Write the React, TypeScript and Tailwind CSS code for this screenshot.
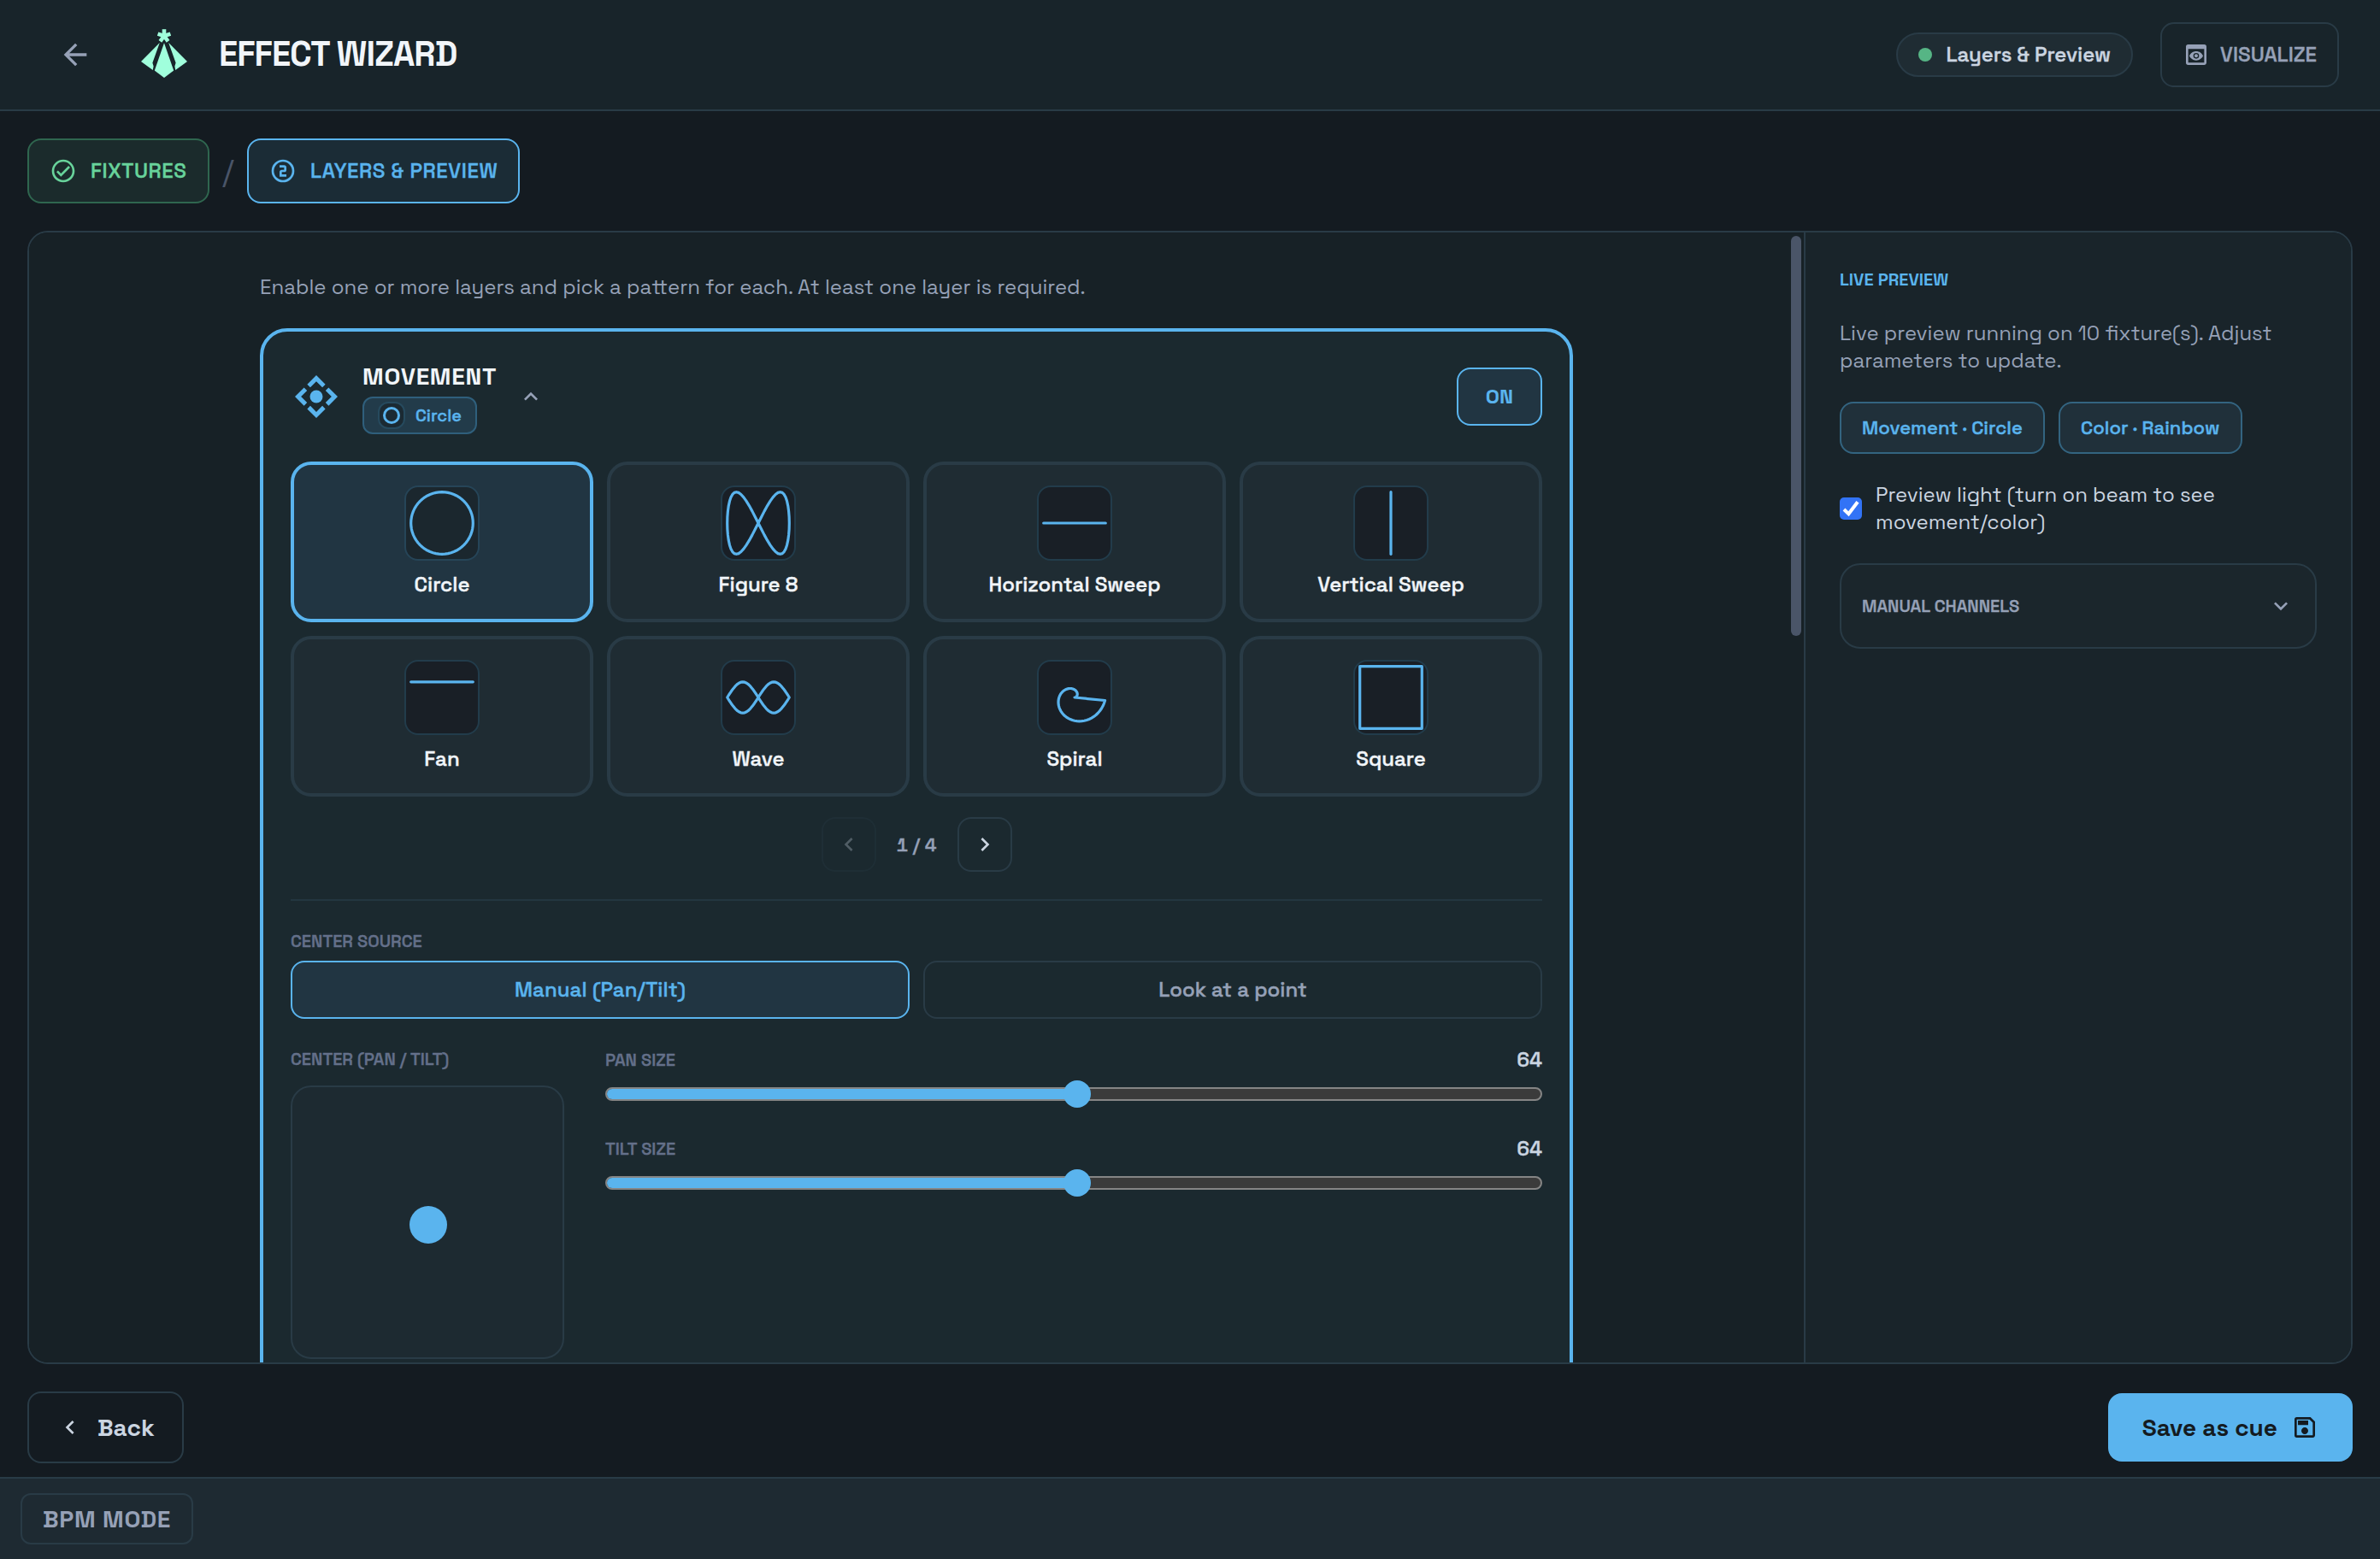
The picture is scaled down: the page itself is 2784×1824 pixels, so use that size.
import React from "react";
import {
  MdArrowBack,
  MdChevronLeft,
  MdChevronRight,
  MdExpandLess,
  MdExpandMore,
  MdOutlineSave,
  MdPreview,
} from "react-icons/md";

type Point = [number, number];

const R = 36.3;
const STEPS = 64;

function toPath(points: Point[], close: boolean) {
  return points.map(([x, y], i) => `${i ? "L" : "M"}${x.toFixed(2)} ${y.toFixed(2)}`).join(" ") + (close ? " Z" : "");
}

function sample(fn: (t: number) => Point): Point[] {
  return Array.from({ length: STEPS }, (_, i) => fn(i / STEPS));
}

const TAU = Math.PI * 2;

const PATHS: Record<string, string> = {
  Circle: toPath(sample((t) => [R * Math.cos(TAU * t), R * Math.sin(TAU * t)]), true),
  "Figure 8": toPath(sample((t) => [R * Math.cos(TAU * t), R * Math.sin(2 * TAU * t)]), true),
  "Horizontal Sweep": `M${-R} 0 L${R} 0`,
  "Vertical Sweep": `M0 ${-R} L0 ${R}`,
  Fan: `M${-R} ${-R / 2} L${R} ${-R / 2}`,
  Wave: toPath(
    sample((t) => {
      const x = t < 0.5 ? -R + 4 * R * t : 3 * R - 4 * R * t;
      return [x, (t < 0.5 ? 1 : -1) * (R / 2) * Math.sin((Math.PI * x) / R)];
    }),
    true,
  ),
  Spiral: toPath(sample((t) => [R * t * Math.cos(TAU * t), -R * t * Math.sin(TAU * t)]), true),
  Square: `M${-R} ${-R} H${R} V${R} H${-R} Z`,
};

// Medium weight thickened slightly to sit between 500 and 700.
const SEMI = "font-medium [-webkit-text-stroke:0.45px_currentColor]";

function Logo() {
  return (
    <svg viewBox="0 0 56 60" className="h-[60px] w-[56px] shrink-0 fill-[#a0ffdc]">
      <g className="stroke-[#a0ffdc]" strokeWidth="4.6">
        {[0, 72, 144, 216, 288].map((a) => (
          <path key={a} d="M28 8V0.2" transform={`rotate(${a} 28 8)`} />
        ))}
      </g>
      <path d="M28 16.2 39.2 48.4 28 57 16.8 48.4Z" />
      <path d="M22.8 16 14.4 39.4 15.6 43.4 14.8 48 1 38Z" />
      <path d="M33.2 16 41.6 39.4 40.4 43.4 41.2 48 55 38Z" />
    </svg>
  );
}

function CheckCircle() {
  return (
    <svg viewBox="0 0 24 24" className="size-8 fill-current">
      <path d="M12 2C6.5 2 2 6.5 2 12S6.5 22 12 22 22 17.5 22 12 17.5 2 12 2M12 20C7.59 20 4 16.41 4 12S7.59 4 12 4 20 7.59 20 12 16.41 20 12 20M16.59 7.58L10 14.17L7.41 11.59L6 13L10 17L18 9L16.59 7.58Z" />
    </svg>
  );
}

function StepTwo() {
  return (
    <svg viewBox="0 0 24 24" className="size-8 fill-current">
      <path d="M9,7V9H13V11H11A2,2 0 0,0 9,13V17H11L15,17V15H11V13H13A2,2 0 0,0 15,11V9A2,2 0 0,0 13,7H9M12,2A10,10 0 0,1 22,12A10,10 0 0,1 12,22A10,10 0 0,1 2,12A10,10 0 0,1 12,2M12,4A8,8 0 0,0 4,12A8,8 0 0,0 12,20A8,8 0 0,0 20,12A8,8 0 0,0 12,4Z" />
    </svg>
  );
}

function MovementIcon() {
  return (
    <svg viewBox="0 0 24 24" className="size-[60px] shrink-0 fill-[#5ab4ee]">
      <circle cx="12" cy="12" r="3" />
      {[0, 90, 180, 270].map((a) => (
        <path key={a} d="M12 2 16.25 6.25 14.82 7.68 12 4.85 9.18 7.68 7.75 6.25Z" transform={`rotate(${a} 12 12)`} />
      ))}
    </svg>
  );
}

function PatternCard({ name, selected }: { name: string; selected?: boolean }) {
  return (
    <div
      className={`flex h-[188px] flex-col items-center rounded-3xl border-4 pt-6 ${
        selected ? "border-[#5ab4ee] bg-[#213542]" : "border-[#293b46] bg-[#1f2c33]"
      }`}
    >
      <div
        className={`size-[88px] rounded-2xl border-2 ${
          selected ? "border-[#264558] bg-[#1b272e]" : "border-[#223c4b] bg-[#191f26]"
        }`}
      >
        <svg viewBox="-42 -42 84 84" className="size-[84px] fill-none stroke-[#5ab4ee]">
          <path d={PATHS[name]} strokeWidth="3.2" strokeLinejoin="round" strokeLinecap="round" />
        </svg>
      </div>
      <div className={`mt-3 text-[24px]/[32px] text-[#f1f5f9] ${SEMI}`}>{name}</div>
    </div>
  );
}

function Slider({ label, value }: { label: string; value: number }) {
  const ratio = value / 127;
  return (
    <div className="flex flex-col gap-4">
      <div className="flex h-8 items-center justify-between">
        <span className={`text-[20px]/[30px] text-[#64708a] ${SEMI}`}>{label}</span>
        <span className={`text-[24px]/[32px] text-[#cbd5e1] tabular-nums ${SEMI}`}>{value}</span>
      </div>
      <div className="relative h-4 rounded-full border-2 border-[#858585] bg-[#3b3b3b]">
        <div className="h-full rounded-l-full bg-[#5ab4ee]" style={{ width: `${ratio * 100}%` }} />
        <div
          className="absolute -top-[10px] size-8 rounded-full bg-[#5ab4ee]"
          style={{ left: `calc((100% - 28px) * ${ratio} - 2px)` }}
        />
      </div>
    </div>
  );
}

function Header() {
  return (
    <header className="flex h-[130px] shrink-0 items-center border-b-2 border-[#293b46] bg-[#18242a] pr-12 pl-[68px]">
      <MdArrowBack className="size-10 text-[#96a1b7]" />
      <div className="ml-14 flex">
        <Logo />
      </div>
      <h1 className="ml-9 text-[40px]/[56px] font-bold tracking-tight text-[#f1f5f9]">EFFECT WIZARD</h1>
      <div className="ml-auto flex items-center gap-8">
        <div className="flex h-[52px] items-center gap-4 rounded-full border-2 border-[#293b46] bg-[#1f2c33] px-6">
          <span className="size-4 rounded-full bg-[#56b585]" />
          <span className={`text-[24px]/[32px] text-[#cbd5e1] ${SEMI}`}>Layers &amp; Preview</span>
        </div>
        <button className="flex h-[76px] items-center gap-3 rounded-2xl border-2 border-[#293b46] px-6 text-[#96a1b7]">
          <MdPreview className="size-8" />
          <span className={`text-[24px]/[32px] ${SEMI}`}>VISUALIZE</span>
        </button>
      </div>
    </header>
  );
}

function Steps() {
  return (
    <nav className="mt-8 flex h-[76px] shrink-0 items-center gap-4 px-8">
      <div className="flex h-full w-[213px] items-center gap-4 rounded-2xl border-2 border-[#2f664f] bg-[#1b2b2c] px-6 text-[#68d39b]">
        <CheckCircle />
        <span className={`text-[24px]/[32px] tracking-wide ${SEMI}`}>FIXTURES</span>
      </div>
      <span className="flex w-3 justify-center text-[36px]/[40px] text-[#4a5568]">/</span>
      <div className="flex h-full items-center gap-4 rounded-2xl border-2 border-[#5ab4ee] bg-[#1b2c36] px-6 text-[#5ab4ee]">
        <StepTwo />
        <span className={`text-[24px]/[32px] tracking-wide ${SEMI}`}>LAYERS &amp; PREVIEW</span>
      </div>
    </nav>
  );
}

function MovementLayer() {
  return (
    <section className="mt-8 rounded-t-[32px] border-4 border-[#5ab4ee] bg-[#1b292f] p-8">
      <div className="flex h-[88px] items-center">
        <MovementIcon />
        <div className="ml-6 flex flex-col items-start gap-1">
          <h2 className="text-[28px]/[40px] font-bold tracking-wide text-[#f1f5f9]">MOVEMENT</h2>
          <div className="flex h-11 items-center gap-3 rounded-xl border-2 border-[#2f5f7c] bg-[#223b4a] px-4 text-[#5ab4ee]">
            <span className="flex size-8 items-center justify-center rounded-[12px] border-2 border-[#264a5e] bg-[#1b2a33]">
              <span className="size-5 rounded-full border-[3.5px] border-[#5ab4ee]" />
            </span>
            <span className={`text-[20px]/[30px] ${SEMI}`}>Circle</span>
          </div>
        </div>
        <MdExpandLess className="ml-6 size-8 text-[#96a1b7]" />
        <button className="ml-auto h-[68px] w-[100px] rounded-2xl border-2 border-[#5ab4ee] bg-[#213542] text-[24px]/[32px] font-bold text-[#5ab4ee]">
          ON
        </button>
      </div>

      <div className="mt-8 grid grid-cols-4 gap-4">
        <PatternCard name="Circle" selected />
        <PatternCard name="Figure 8" />
        <PatternCard name="Horizontal Sweep" />
        <PatternCard name="Vertical Sweep" />
        <PatternCard name="Fan" />
        <PatternCard name="Wave" />
        <PatternCard name="Spiral" />
        <PatternCard name="Square" />
      </div>

      <div className="mt-6 flex items-center justify-center gap-6">
        <button className="flex size-16 items-center justify-center rounded-2xl border-2 border-[#293b46] text-[#cbd5e1] opacity-30">
          <MdChevronLeft className="size-8" />
        </button>
        <span className={`w-[47px] text-center text-[22px]/[33px] whitespace-nowrap text-[#96a1b7] tabular-nums ${SEMI}`}>
          1 / 4
        </span>
        <button className="flex size-16 items-center justify-center rounded-2xl border-2 border-[#293b46] text-[#cbd5e1]">
          <MdChevronRight className="size-8" />
        </button>
      </div>

      <div className="mt-8 border-t-2 border-[#233640] pt-8">
        <div className={`text-[20px]/[30px] text-[#64708a] ${SEMI}`}>CENTER SOURCE</div>
        <div className="mt-2 grid grid-cols-2 gap-4">
          <button
            className={`h-[68px] rounded-2xl border-2 border-[#5ab4ee] bg-[#213542] text-[24px]/[32px] tracking-[0.12px] text-[#5ab4ee] ${SEMI}`}
          >
            Manual (Pan/Tilt)
          </button>
          <button className={`h-[68px] rounded-2xl border-2 border-[#293b46] text-[24px]/[32px] text-[#96a1b7] ${SEMI}`}>
            Look at a point
          </button>
        </div>
        <div className="mt-8 flex gap-12">
          <div>
            <div className={`text-[20px]/[30px] text-[#64708a] ${SEMI}`}>CENTER (PAN / TILT)</div>
            <div className="mt-4 flex size-80 items-center justify-center rounded-3xl border-2 border-[#293b46] bg-[#1d2a31]">
              <div className="mt-[6px] ml-[2px] size-11 rounded-full bg-[#5ab4ee]" />
            </div>
          </div>
          <div className="flex flex-1 flex-col gap-10">
            <Slider label="PAN SIZE" value={64} />
            <Slider label="TILT SIZE" value={64} />
          </div>
        </div>
      </div>
    </section>
  );
}

function LivePreview() {
  return (
    <aside className="w-[640px] shrink-0 border-l-2 border-[#293b46] bg-[#19242a] px-10 pt-10">
      <h3 className="text-[20px]/[30px] font-bold text-[#5ab4ee]">LIVE PREVIEW</h3>
      <p className="mt-8 text-[24px]/[32px] text-[#96a1b7]">
        Live preview running on 10 fixture(s). Adjust parameters to update.
      </p>
      <div className="mt-8 flex gap-4">
        {["Movement · Circle", "Color · Rainbow"].map((tag) => (
          <span
            key={tag}
            className={`rounded-2xl border-2 border-[#336480] bg-[#20303a] px-6 py-3 text-[22px]/[33px] tracking-[0.06px] text-[#5ab4ee] ${SEMI}`}
          >
            {tag}
          </span>
        ))}
      </div>
      <label className="mt-8 flex items-center gap-4">
        <span className="flex size-[26px] shrink-0 items-center justify-center rounded-[5px] bg-[#3273f6]">
          <svg viewBox="0 0 26 26" className="size-[26px] fill-none stroke-white">
            <path d="M5 14 10.4 19.2 21 5.2" strokeWidth="4" />
          </svg>
        </span>
        <span className="text-[24px]/[32px] text-[#cbd5e1]">
          Preview light (turn on beam to see movement/color)
        </span>
      </label>
      <div className="mt-8 flex h-[100px] items-center justify-between rounded-3xl border-2 border-[#293b46] bg-[#1b262c] px-6 text-[#96a1b7]">
        <span className={`text-[20px]/[30px] ${SEMI}`}>MANUAL CHANNELS</span>
        <MdExpandMore className="size-8" />
      </div>
    </aside>
  );
}

export default function App() {
  return (
    <div className="flex h-[1824px] w-[2784px] flex-col overflow-hidden bg-[#141b21] font-['Space_Grotesk','Inter',sans-serif]">
      <Header />
      <Steps />
      <main className="mx-8 mt-8 flex h-[1326px] shrink-0 overflow-hidden rounded-3xl border-2 border-[#293b46]">
        <div className="relative flex-1 overflow-hidden bg-[#172126]">
          <div className="mx-auto w-[1536px] pt-12">
            <p className="text-[24px]/[32px] text-[#96a1b7]">
              Enable one or more layers and pick a pattern for each. At least one layer is required.
            </p>
            <MovementLayer />
          </div>
          <div className="absolute top-1 right-[3px] h-[468px] w-3 rounded-full bg-[#4a5568]" />
        </div>
        <LivePreview />
      </main>
      <div className="mt-8 flex h-[84px] shrink-0 items-center justify-between px-8">
        <button className="flex h-[84px] items-center gap-4 rounded-2xl border-2 border-[#293b46] px-8 text-[28px]/[40px] font-bold text-[#cbd5e1]">
          <MdChevronLeft className="size-8" />
          Back
        </button>
        <button className="flex h-20 items-center gap-4 rounded-2xl bg-[#5ab4ee] px-10 text-[28px]/[40px] font-bold text-[#141b21]">
          Save as cue
          <MdOutlineSave className="size-8" />
        </button>
      </div>
      <footer className="mt-4 flex flex-1 items-start border-t-2 border-[#293b46] bg-[#1e2a32] px-6 pt-[17px]">
        <button className="h-[60px] rounded-xl border-2 border-[#293b46] px-6 text-[28px]/[40px] font-bold tracking-wide text-[#96a1b7]">
          BPM MODE
        </button>
      </footer>
    </div>
  );
}
